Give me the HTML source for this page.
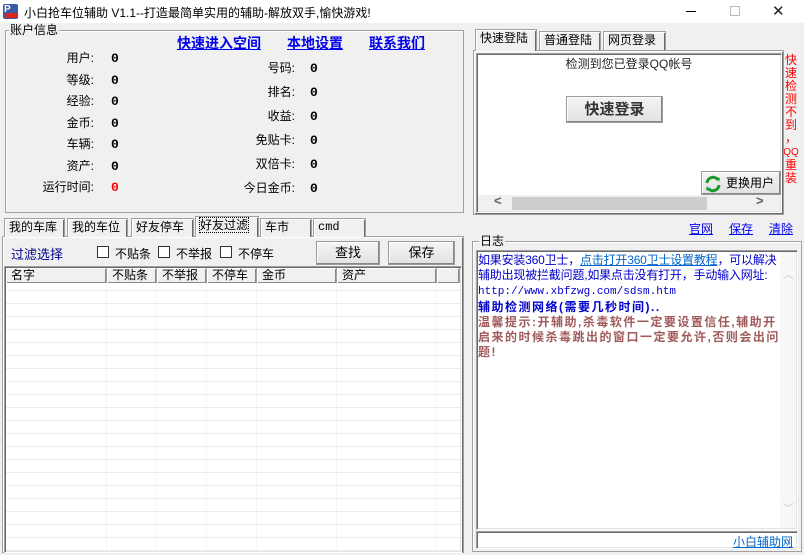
<!DOCTYPE html>
<html><head><meta charset="utf-8"><style>
*{margin:0;padding:0;box-sizing:border-box}
body{width:804px;height:555px;background:#f0f0f0;font-family:"Liberation Sans","Noto Sans CJK SC","WenQuanYi Zen Hei",sans-serif;font-size:12px;color:#000;position:relative;overflow:hidden}
.a{position:absolute;white-space:nowrap}
.gb{position:absolute;border:1px solid #a0a0a0;box-shadow:inset 1px 1px 0 #fff}
.lbl{position:absolute;background:#f0f0f0;padding:0 1px;font-size:12px;line-height:14px}
.r{text-align:right}
.v{font-weight:bold;font-family:"Liberation Mono",monospace;font-size:13px}
.lnk{color:#0000ee;text-decoration:underline;font-weight:bold;font-size:14px}
.tab{position:absolute;height:19px;border:1px solid #a0a0a0;border-bottom:none;background:#f0f0f0;font-size:12px;line-height:17px;padding-left:4px;box-shadow:inset 1px 1px 0 #fff,inset -1px 0 0 #696969}
.btn{position:absolute;background:linear-gradient(#f4f4f4,#e2e2e2);border:1px solid #9a9a9a;box-shadow:inset -1px -1px 0 #888,inset 1px 1px 0 #fff;text-align:center}
.sunk{position:absolute;border:1px solid #a0a0a0;border-right-color:#fff;border-bottom-color:#fff;box-shadow:inset 1px 1px 0 #696969,inset -1px -1px 0 #e3e3e3;background:#fff}
.cb{position:absolute;width:12px;height:12px;border:1px solid #333;background:#fff;top:246px}
.th{position:absolute;top:0;height:15px;border-right:1px solid #a0a0a0;box-shadow:inset 1px 1px 0 #fff,inset -1px -1px 0 #888;font-size:12px;line-height:15px;padding-left:5px;background:#f0f0f0}
</style></head><body>
<div class="a" style="left:0;top:0;width:804px;height:23px;background:#fff"></div>
<div class="a" style="left:3px;top:4px;width:15px;height:15px;background:#3a5aa8;border-radius:2px"><div style="position:absolute;left:1px;top:0;color:#fff;font-weight:bold;font-size:10px">P</div><div style="position:absolute;left:2px;bottom:1px;width:12px;height:5px;background:#d22"></div></div>
<div class="a" style="left:24px;top:4px;font-size:12px">小白抢车位辅助 V1.1--打造最简单实用的辅助-解放双手,愉快游戏!</div>
<div class="a" style="left:686px;top:11px;width:10px;height:1px;background:#000"></div>
<div class="a" style="left:730px;top:6px;width:10px;height:10px;border:1px solid #bbb"></div>
<div class="a" style="left:772px;top:2px;font-size:15px;color:#222">✕</div>

<div class="gb" style="left:5px;top:30px;width:459px;height:183px"></div>
<div class="lbl" style="left:9px;top:23px">账户信息</div>
<div class="a lnk" style="left:177px;top:33px">快速进入空间</div>
<div class="a lnk" style="left:287px;top:33px">本地设置</div>
<div class="a lnk" style="left:369px;top:33px">联系我们</div>
<div class="a r" style="left:20px;top:48px;width:74px;line-height:21.5px">用户:<br>等级:<br>经验:<br>金币:<br>车辆:<br>资产:<br>运行时间:</div>
<div class="a v" style="left:111px;top:48px;line-height:21.5px">0<br>0<br>0<br>0<br>0<br>0<br><span style="color:#f00">0</span></div>
<div class="a r" style="left:220px;top:56px;width:75px;line-height:24px">号码:<br>排名:<br>收益:<br>免贴卡:<br>双倍卡:<br>今日金币:</div>
<div class="a v" style="left:310px;top:57px;line-height:24px">0<br>0<br>0<br>0<br>0<br>0</div>

<div class="a" style="left:473px;top:50px;width:311px;height:165px;border:1px solid #a0a0a0;box-shadow:inset 1px 1px 0 #fff,inset -1px -1px 0 #696969"></div>
<div class="tab" style="left:475px;top:29px;width:62px;height:22px;background:#f0f0f0;z-index:2">快速登陆</div>
<div class="tab" style="left:539px;top:31px;width:62px">普通登陆</div>
<div class="tab" style="left:603px;top:31px;width:63px">网页登录</div>
<div class="sunk" style="left:476px;top:53px;width:306px;height:160px"></div>
<div class="a" style="left:478px;top:55px;width:302px;text-align:center;font-size:12px;color:#222">检测到您已登录QQ帐号</div>
<div class="btn" style="left:566px;top:96px;width:97px;height:27px;font-weight:bold;font-size:15px;line-height:25px;color:#333">快速登录</div>
<div class="btn" style="left:701px;top:171px;width:80px;height:24px;font-size:12px;line-height:22px;text-align:left;padding-left:24px">更换用户</div>
<svg class="a" style="left:704px;top:175px" width="18" height="18" viewBox="0 0 18 18"><path d="M3 8a6 6 0 0 1 11-3" stroke="#1a9a2a" stroke-width="3" fill="none"/><path d="M12 2l4 1-1 4z" fill="#1a9a2a"/><path d="M15 10a6 6 0 0 1-11 3" stroke="#1a9a2a" stroke-width="3" fill="none"/><path d="M6 16l-4-1 1-4z" fill="#1a9a2a"/></svg>
<div class="a" style="left:478px;top:195px;width:302px;height:16px;background:#f0f0f0"></div>
<div class="a" style="left:512px;top:197px;width:195px;height:13px;background:#cdcdcd"></div>
<div class="a" style="left:494px;top:193px;color:#606060;font-weight:bold;font-size:13px">&lt;</div>
<div class="a" style="left:756px;top:193px;color:#606060;font-weight:bold;font-size:13px">&gt;</div>
<div class="a" style="left:783px;top:54px;width:16px;color:#f00;font-size:12px;line-height:13px;text-align:center">快<br>速<br>检<br>测<br>不<br>到<br>，<br><span style="font-size:10px">QQ</span><br>重<br>装</div>

<div class="a" style="left:689px;top:220px;color:#0000ee;text-decoration:underline">官网</div>
<div class="a" style="left:729px;top:220px;color:#0000ee;text-decoration:underline">保存</div>
<div class="a" style="left:769px;top:220px;color:#0000ee;text-decoration:underline">清除</div>

<div class="gb" style="left:472px;top:241px;width:330px;height:311px"></div>
<div class="lbl" style="left:479px;top:234px">日志</div>
<div class="sunk" style="left:476px;top:250px;width:322px;height:280px"></div>
<div class="a" style="left:780px;top:252px;width:16px;height:276px;background:#f7f7f7"></div>
<div class="a" style="left:783px;top:266px;color:#c8c8c8;font-size:11px">︿</div>
<div class="a" style="left:783px;top:500px;color:#c8c8c8;font-size:11px">﹀</div>
<div class="a" style="left:478px;top:253px;font-size:12px;line-height:15px;color:#00c;letter-spacing:-0.2px">如果安装360卫士，<span style="color:#0066cc;text-decoration:underline">点击打开360卫士设置教程</span>，可以解决<br>辅助出现被拦截问题,如果点击没有打开，手动输入网址:<br><span style="font-family:'Liberation Mono',monospace;font-size:11px;letter-spacing:0">http://www.xbfzwg.com/sdsm.htm</span><br><b style="letter-spacing:1.5px">辅助检测网络(需要几秒时间)..</b><br><b style="color:#a05a5a;letter-spacing:1.5px">温馨提示:开辅助,杀毒软件一定要设置信任,辅助开<br>启来的时候杀毒跳出的窗口一定要允许,否则会出问<br>题!</b></div>
<div class="sunk" style="left:476px;top:531px;width:322px;height:18px"></div>
<div class="a" style="left:733px;top:533px;color:#0066cc;text-decoration:underline">小白辅助网</div>

<div class="a" style="left:2px;top:236px;width:462px;height:317px;border:1px solid #a0a0a0;box-shadow:inset 1px 1px 0 #fff,inset -1px -1px 0 #696969"></div>
<div class="tab" style="left:4px;top:218px;width:61px">我的车库</div>
<div class="tab" style="left:67px;top:218px;width:61px">我的车位</div>
<div class="tab" style="left:131px;top:218px;width:63px">好友停车</div>
<div class="tab" style="left:195px;top:216px;width:64px;height:21px;z-index:2"><span style="outline:1px dotted #000">好友过滤</span></div>
<div class="tab" style="left:260px;top:218px;width:52px">车市</div>
<div class="tab" style="left:313px;top:218px;width:53px;font-family:'Liberation Mono',monospace">cmd</div>
<div class="a" style="left:11px;top:244px;color:#00008b;font-size:13px">过滤选择</div>
<div class="cb" style="left:97px"></div><div class="a" style="left:115px;top:245px">不贴条</div>
<div class="cb" style="left:158px"></div><div class="a" style="left:176px;top:245px">不举报</div>
<div class="cb" style="left:220px"></div><div class="a" style="left:238px;top:245px">不停车</div>
<div class="btn" style="left:316px;top:241px;width:64px;height:24px;line-height:22px;font-size:13px">查找</div>
<div class="btn" style="left:388px;top:241px;width:67px;height:24px;line-height:22px;font-size:13px">保存</div>
<div class="sunk" style="left:4px;top:266px;width:458px;height:287px;background:#fff;background-image:linear-gradient(#ececec 1px,transparent 1px);background-size:100% 13px;background-position:0 10px"></div>
<div class="a" style="left:6px;top:268px;width:454px;height:284px;background-image:linear-gradient(90deg,transparent 100px,#ececec 100px,transparent 101px,transparent 150px,#ececec 150px,transparent 151px,transparent 200px,#ececec 200px,transparent 201px,transparent 250px,#ececec 250px,transparent 251px,transparent 330px,#ececec 330px,transparent 331px,transparent 430px,#ececec 430px,transparent 431px)"></div>
<div class="a" style="left:6px;top:268px;width:454px;height:15px">
<div class="th" style="left:0;width:101px">名字</div>
<div class="th" style="left:101px;width:50px">不贴条</div>
<div class="th" style="left:151px;width:50px">不举报</div>
<div class="th" style="left:201px;width:50px">不停车</div>
<div class="th" style="left:251px;width:80px">金币</div>
<div class="th" style="left:331px;width:100px">资产</div>
<div class="th" style="left:431px;width:23px"></div>
</div>
</body></html>
